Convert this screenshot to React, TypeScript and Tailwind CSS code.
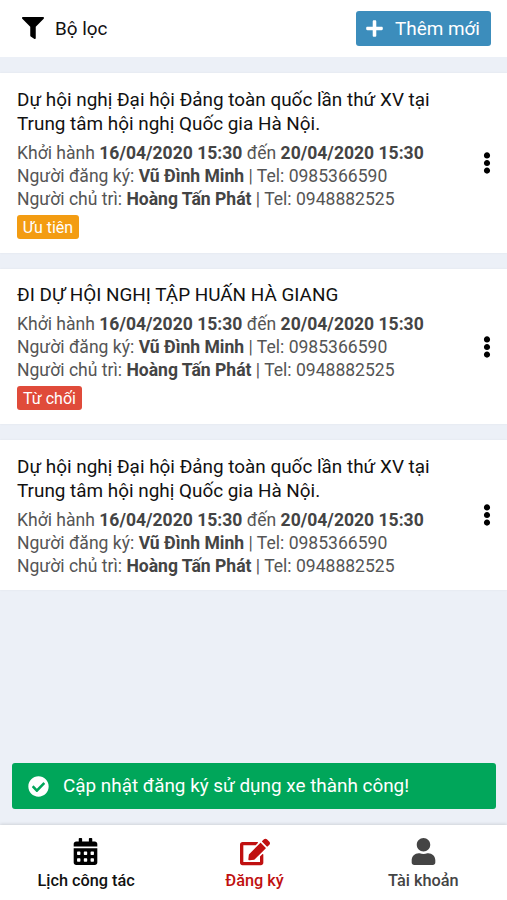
import React from "react";
import {
    FaCalendarAlt,
    FaCheckCircle,
    FaEdit,
    FaEllipsisV,
    FaFilter,
    FaPlus,
    FaUser,
} from "react-icons/fa";

type Trip = {
    title: string[];
    status?: string;
    statusClass?: string;
    className: string;
    bodyClass: string;
};

const trips: Trip[] = [
    {
        title: [
            "Dự hội nghị Đại hội Đảng toàn quốc lần thứ XV tại",
            "Trung tâm hội nghị Quốc gia Hà Nội.",
        ],
        status: "Ưu tiên",
        statusClass: "bg-[#f39c12] w-[62px]",
        className: "h-[180px]",
        bodyClass: "pt-[15px]",
    },
    {
        title: ["ĐI DỰ HỘI NGHỊ TẬP HUẤN HÀ GIANG"],
        status: "Từ chối",
        statusClass: "bg-[#e04b3a] w-[65px]",
        className: "h-[155px]",
        bodyClass: "pt-[14px]",
    },
    {
        title: [
            "Dự hội nghị Đại hội Đảng toàn quốc lần thứ XV tại",
            "Trung tâm hội nghị Quốc gia Hà Nội.",
        ],
        className: "h-[150px]",
        bodyClass: "pt-[15px]",
    },
];

const TripCard = ({ trip }: { trip: Trip }) => {
    return (
        <div
            className={`flex items-center justify-between bg-white pl-[17px] pr-[12px] shadow-[0_0_2px_rgba(0,0,0,0.06)] ${trip.className}`}
        >
            <div className={`h-full whitespace-nowrap ${trip.bodyClass}`}>
                <div className="text-[18.9px] leading-[24px] text-[#111]">
                    {trip.title.map((line) => (
                        <p key={line}>{line}</p>
                    ))}
                </div>
                <div className="mt-[6px] text-[17.56px] leading-[23px] text-[#555]">
                    <p>
                        Khởi hành{" "}
                        <b className="text-[#444]">16/04/2020 15:30</b> đến{" "}
                        <b className="text-[#444]">20/04/2020 15:30</b>
                    </p>
                    <p>
                        Người đăng ký:{" "}
                        <b className="text-[#444]">Vũ Đình Minh</b> | Tel:
                        0985366590
                    </p>
                    <p>
                        Người chủ trì:{" "}
                        <b className="text-[#444]">Hoàng Tấn Phát</b> | Tel:
                        0948882525
                    </p>
                </div>
                {trip.status && (
                    <div
                        className={`mt-[4px] flex h-[24px] items-center justify-center rounded-[3px] pt-[2px] text-[16px] text-white ${trip.statusClass}`}
                    >
                        {trip.status}
                    </div>
                )}
            </div>
            <FaEllipsisV size={22} className="-mr-[3px] text-black" />
        </div>
    );
};

export default function App() {
    return (
        <div className="flex h-[900px] w-[507px] flex-col overflow-hidden bg-[#ecf0f7] font-['Roboto',sans-serif]">
            <header className="flex h-[57px] shrink-0 items-center justify-between bg-white pl-[22px] pr-[16px]">
                <button className="flex items-center gap-[11px] text-[18.9px] text-[#111]">
                    <FaFilter size={22} className="text-black" />
                    <span className="pt-px">Bộ lọc</span>
                </button>
                <button className="flex h-[35px] w-[135px] items-center justify-center gap-[11px] rounded-[3px] bg-[#3c8dbc] pr-[2px] text-[18.9px] text-white">
                    <FaPlus size={19} />
                    <span className="pt-px">Thêm mới</span>
                </button>
            </header>
            <main className="flex flex-1 flex-col gap-[16px] pt-[16px]">
                {trips.map((trip, i) => (
                    <TripCard key={i} trip={trip} />
                ))}
            </main>
            <div className="mr-[11px] mb-[16px] ml-[12px] flex h-[46px] shrink-0 items-center gap-[14px] rounded-[3px] bg-[#00a65a] pl-[16px] text-[18.9px] text-white">
                <FaCheckCircle size={21} />
                <span className="pt-px">
                    Cập nhật đăng ký sử dụng xe thành công!
                </span>
            </div>
            <nav className="grid h-[75px] shrink-0 grid-cols-3 bg-white pt-[13px] pl-[2px] text-[16.3px] leading-[24px] font-medium shadow-[0_-1px_3px_rgba(0,0,0,0.12)]">
                <div className="flex flex-col items-center gap-[3px] text-[#111]">
                    <FaCalendarAlt
                        size={27}
                        className="mr-px mb-px text-black"
                    />
                    Lịch công tác
                </div>
                <div className="flex flex-col items-center gap-[3px] text-[#c01010]">
                    <FaEdit size={30} className="-mt-px -mb-px ml-[2px]" />
                    Đăng ký
                </div>
                <div className="flex flex-col items-center gap-[3px] pl-px text-[#444]">
                    <FaUser size={27} className="mb-px" />
                    Tài khoản
                </div>
            </nav>
        </div>
    );
}
